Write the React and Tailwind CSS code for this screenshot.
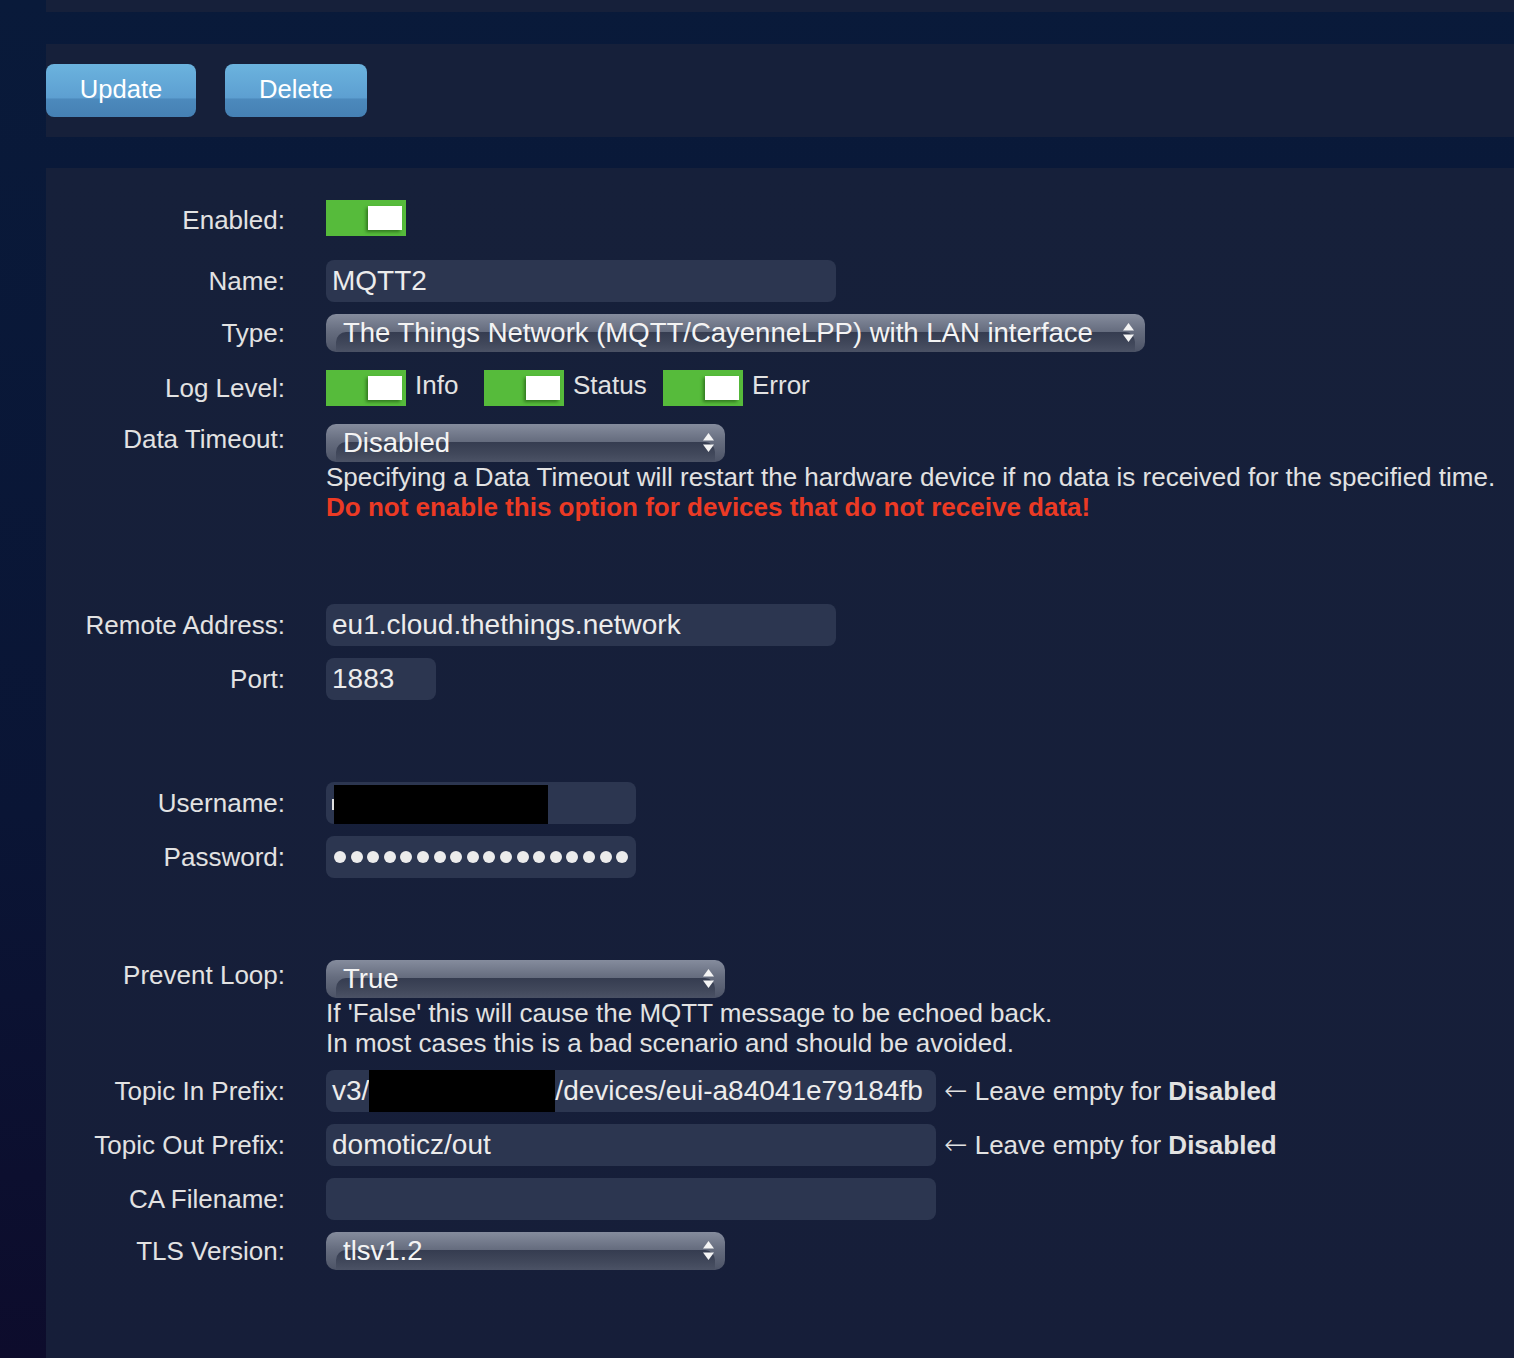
import React from "react";

const Toggle = () => (
  <div className="flex h-[36px] w-[80px] shrink-0 items-center justify-end bg-[#56bb3b] pr-[4px]">
    <div className="h-[24px] w-[34px] bg-white shadow-[-2px_2px_3px_rgba(20,70,10,0.55)]" />
  </div>
);

const Select = ({ value, className = "" }) => (
  <div
    className={`relative flex h-[38px] items-center rounded-[10px] bg-[linear-gradient(to_bottom,#858c9d_0%,#666d7f_45%,#4c5366_100%)] ${className}`}
  >
    {/* glossy inner band */}
    <div className="absolute bottom-0 left-[10px] right-[10px] top-[18px] rounded-t-[10px] bg-[linear-gradient(to_bottom,#353c50_0%,#41485b_60%,#4b5265_100%)]" />
    <span className="relative pl-[17px] text-[27.5px] leading-none text-[#f4f4f4]">
      {value}
    </span>
    <svg
      className="absolute right-[11px] top-[9px]"
      width="11"
      height="20"
      viewBox="0 0 11 20"
    >
      <polygon points="5.5,0 11,7.5 0,7.5" fill="#f4f4f4" />
      <polygon points="0,11.5 11,11.5 5.5,19" fill="#f4f4f4" />
    </svg>
  </div>
);

const Input = ({ className = "", children }) => (
  <div
    className={`flex h-[42px] items-center overflow-hidden whitespace-nowrap rounded-[8px] bg-[#2c3650] pl-[6px] text-[28px] text-[#ececec] ${className}`}
  >
    {children}
  </div>
);

const Row = ({ label, className = "", align = "items-center", labelClass = "", children }) => (
  <div className={`flex ${align} ${className}`}>
    <div className={`w-[239px] shrink-0 text-right leading-[30px] ${labelClass}`}>
      {label}
    </div>
    <div className="ml-[41px] min-w-0 flex-1">{children}</div>
  </div>
);

const Hint = () => (
  <span className="ml-[8px] whitespace-nowrap">
    <span className="font-['DejaVu_Sans',sans-serif] text-[28px] font-light">←</span>{" "}
    Leave empty for <b className="font-bold">Disabled</b>
  </span>
);

const App = () => {
  return (
    <div className="flex min-h-screen w-full bg-[linear-gradient(to_bottom,#091a3a_0%,#0a1535_60%,#0d0c2c_100%)] font-['Liberation_Sans',Arial,sans-serif] text-[26px] text-[#e2e2e2]">
      {/* left gutter */}
      <div className="w-[46px] shrink-0" />

      <div className="flex min-w-0 flex-1 flex-col">
        <div className="h-[12px] bg-[#16203a]" />

        {/* action buttons */}
        <div className="mt-[32px] flex h-[93px] items-start gap-[29px] bg-[#16203a] pt-[20px]">
          <button className="h-[53px] w-[150px] rounded-[8px] bg-[linear-gradient(to_bottom,#6bb3de_0%,#5d9fd1_64%,#4c89bc_66%,#4580b4_100%)] pb-[2px] text-[25.6px] text-white">
            Update
          </button>
          <button className="h-[53px] w-[142px] rounded-[8px] bg-[linear-gradient(to_bottom,#6bb3de_0%,#5d9fd1_64%,#4c89bc_66%,#4580b4_100%)] pb-[2px] text-[25.6px] text-white">
            Delete
          </button>
        </div>

        {/* form */}
        <div className="mt-[31px] flex flex-1 flex-col bg-[linear-gradient(to_bottom,#16203a,#161e39)] pb-[88px] pt-[32px]">
          <Row label="Enabled:" labelClass="pt-[4px]">
            <Toggle />
          </Row>

          <Row label="Name:" className="mt-[24px]">
            <Input className="w-[510px]">MQTT2</Input>
          </Row>

          <Row label="Type:" className="mt-[12px]">
            <Select
              className="w-[819px]"
              value="The Things Network (MQTT/CayenneLPP) with LAN interface"
            />
          </Row>

          <Row label="Log Level:" className="mt-[18px]">
            <div className="flex items-center">
              <div className="flex w-[158px] items-center">
                <Toggle />
                <span className="ml-[9px] -mt-[5px]">Info</span>
              </div>
              <div className="flex w-[179px] items-center">
                <Toggle />
                <span className="ml-[9px] -mt-[5px]">Status</span>
              </div>
              <div className="flex items-center">
                <Toggle />
                <span className="ml-[9px] -mt-[5px]">Error</span>
              </div>
            </div>
          </Row>

          <Row label="Data Timeout:" className="mt-[18px]" align="items-start">
            <Select className="w-[399px]" value="Disabled" />
            <div className="whitespace-nowrap leading-[30px]">
              Specifying a Data Timeout will restart the hardware device if no
              data is received for the specified time.
            </div>
            <div className="whitespace-nowrap font-bold leading-[30px] text-[#ec3a24]">
              Do not enable this option for devices that do not receive data!
            </div>
          </Row>

          <Row label="Remote Address:" className="mt-[82px]">
            <Input className="w-[510px]">eu1.cloud.thethings.network</Input>
          </Row>

          <Row label="Port:" className="mt-[12px]">
            <Input className="w-[110px]">1883</Input>
          </Row>

          <Row label="Username:" className="mt-[82px]">
            <Input className="w-[310px] items-end">
              <span className="mb-[14px] h-[11px] w-[2px] bg-[#e0e0e0]" />
              <span className="h-[39px] w-[214px] bg-black" />
            </Input>
          </Row>

          <Row label="Password:" className="mt-[12px]">
            <Input className="w-[310px] gap-[4.6px] pl-[8px]">
              {Array.from({ length: 18 }).map((_, i) => (
                <span
                  key={i}
                  className="h-[12px] w-[12px] shrink-0 rounded-full bg-[#ececec]"
                />
              ))}
            </Input>
          </Row>

          <Row label="Prevent Loop:" className="mt-[82px]" align="items-start">
            <Select className="w-[399px]" value="True" />
            <div className="whitespace-nowrap leading-[30px]">
              If 'False' this will cause the MQTT message to be echoed back.
            </div>
            <div className="whitespace-nowrap leading-[30px]">
              In most cases this is a bad scenario and should be avoided.
            </div>
          </Row>

          <Row label="Topic In Prefix:" className="mt-[12px]">
            <div className="flex items-center">
              <Input className="w-[610px]">
                <span>v3/</span>
                <span className="h-[42px] w-[186px] shrink-0 bg-black" />
                <span>/devices/eui-a84041e79184fb</span>
              </Input>
              <Hint />
            </div>
          </Row>

          <Row label="Topic Out Prefix:" className="mt-[12px]">
            <div className="flex items-center">
              <Input className="w-[610px]">domoticz/out</Input>
              <Hint />
            </div>
          </Row>

          <Row label="CA Filename:" className="mt-[12px]">
            <Input className="w-[610px]" />
          </Row>

          <Row label="TLS Version:" className="mt-[12px]">
            <Select className="w-[399px]" value="tlsv1.2" />
          </Row>
        </div>
      </div>
    </div>
  );
};

export default App;
